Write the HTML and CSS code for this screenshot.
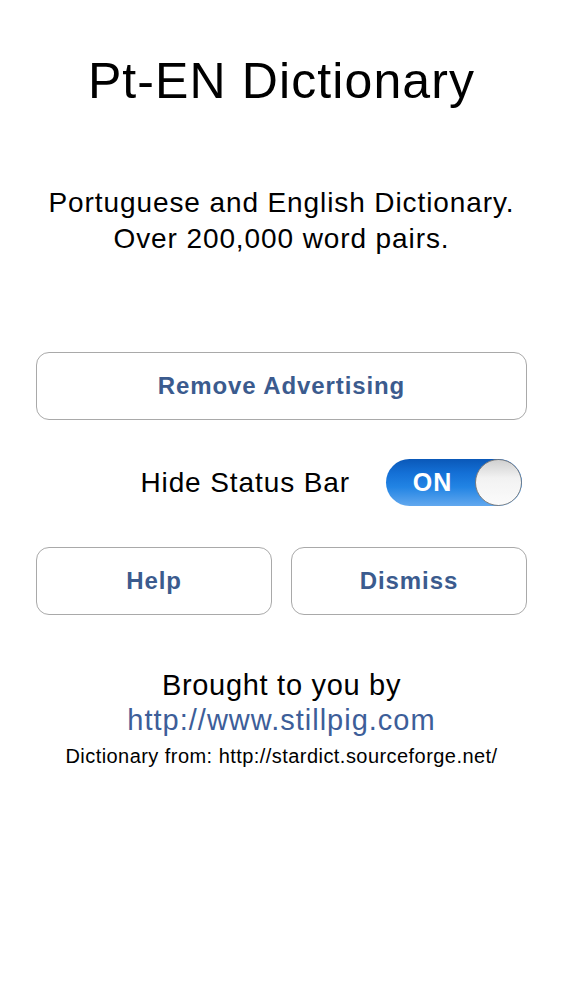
FILE: index.html
```html
<!DOCTYPE html>
<html lang="en">
<head>
<meta charset="utf-8">
<title>Pt-EN Dictionary</title>
<link rel="stylesheet" href="styles.css">
</head>
<body>
<main class="page">
  <h1 class="title">Pt-EN Dictionary</h1>
  <p class="subtitle">Portuguese and English Dictionary.<br>Over 200,000 word pairs.</p>
  <button class="btn btn-wide" type="button">Remove Advertising</button>
  <div class="toggle-row">
    <span class="toggle-label">Hide Status Bar</span>
    <div class="toggle" role="switch" aria-checked="true">
      <span class="toggle-text">ON</span>
      <span class="toggle-knob"></span>
    </div>
  </div>
  <div class="btn-row">
    <button class="btn" type="button">Help</button>
    <button class="btn" type="button">Dismiss</button>
  </div>
  <div class="credits">
    <p class="brought">Brought to you by</p>
    <a class="site" href="#">http://www.stillpig.com</a>
    <p class="source">Dictionary from: http://stardict.sourceforge.net/</p>
  </div>
</main>
</body>
</html>
```

FILE: styles.css
```css
html, body {
  margin: 0;
  padding: 0;
  background: #ffffff;
}

body {
  font-family: "Liberation Sans", Arial, Helvetica, sans-serif;
  color: #000000;
}

.page {
  display: flex;
  flex-direction: column;
  padding: 51px 36px 0 36px;
}

.title {
  margin: 0;
  font-size: 50px;
  line-height: 60px;
  font-weight: normal;
  letter-spacing: 1.1px;
  text-align: center;
}

.subtitle {
  margin: 74px 0 0 0;
  font-size: 28px;
  line-height: 36px;
  letter-spacing: 0.9px;
  text-align: center;
}

.btn {
  display: flex;
  align-items: center;
  justify-content: center;
  height: 68px;
  box-sizing: border-box;
  border: 1.5px solid #a9a9a9;
  border-radius: 13px;
  background: #ffffff;
  color: #3b5b8e;
  font-family: "Liberation Sans", Arial, Helvetica, sans-serif;
  font-size: 24px;
  font-weight: bold;
  letter-spacing: 0.9px;
  padding: 0;
}

.btn-wide {
  margin-top: 95px;
  width: 100%;
}

.toggle-row {
  display: flex;
  align-items: center;
  justify-content: flex-end;
  gap: 36px;
  margin-top: 39px;
  padding-right: 5px;
}

.toggle-label {
  font-size: 28px;
  letter-spacing: 0.9px;
}

.toggle {
  display: flex;
  align-items: center;
  width: 136px;
  height: 47px;
  box-sizing: border-box;
  border-radius: 24px;
  background: linear-gradient(to bottom, #0a58b8 0%, #1470d6 30%, #2284e4 60%, #62a8ee 100%);
  overflow: hidden;
}

.toggle-text {
  flex: 1;
  text-align: center;
  color: #ffffff;
  font-size: 25px;
  font-weight: bold;
  letter-spacing: 1px;
  padding-left: 4px;
}

.toggle-knob {
  width: 47px;
  height: 47px;
  box-sizing: border-box;
  border-radius: 50%;
  border: 1.5px solid #7d7d7d;
  background: linear-gradient(to bottom, #d0d0d0 0%, #f2f2f2 40%, #fbfbfb 100%);
}

.btn-row {
  display: grid;
  grid-template-columns: 1fr 1fr;
  gap: 19px;
  margin-top: 41px;
}

.credits {
  display: flex;
  flex-direction: column;
  align-items: center;
  margin-top: 53px;
  text-align: center;
}

.brought {
  margin: 0;
  font-size: 29px;
  line-height: 35px;
  letter-spacing: 0.7px;
}

.site {
  font-size: 29px;
  line-height: 35px;
  letter-spacing: 1px;
  color: #3d5e99;
  text-decoration: none;
}

.source {
  margin: 4px 0 0 0;
  font-size: 20px;
  line-height: 28px;
  letter-spacing: 0.45px;
}
```
